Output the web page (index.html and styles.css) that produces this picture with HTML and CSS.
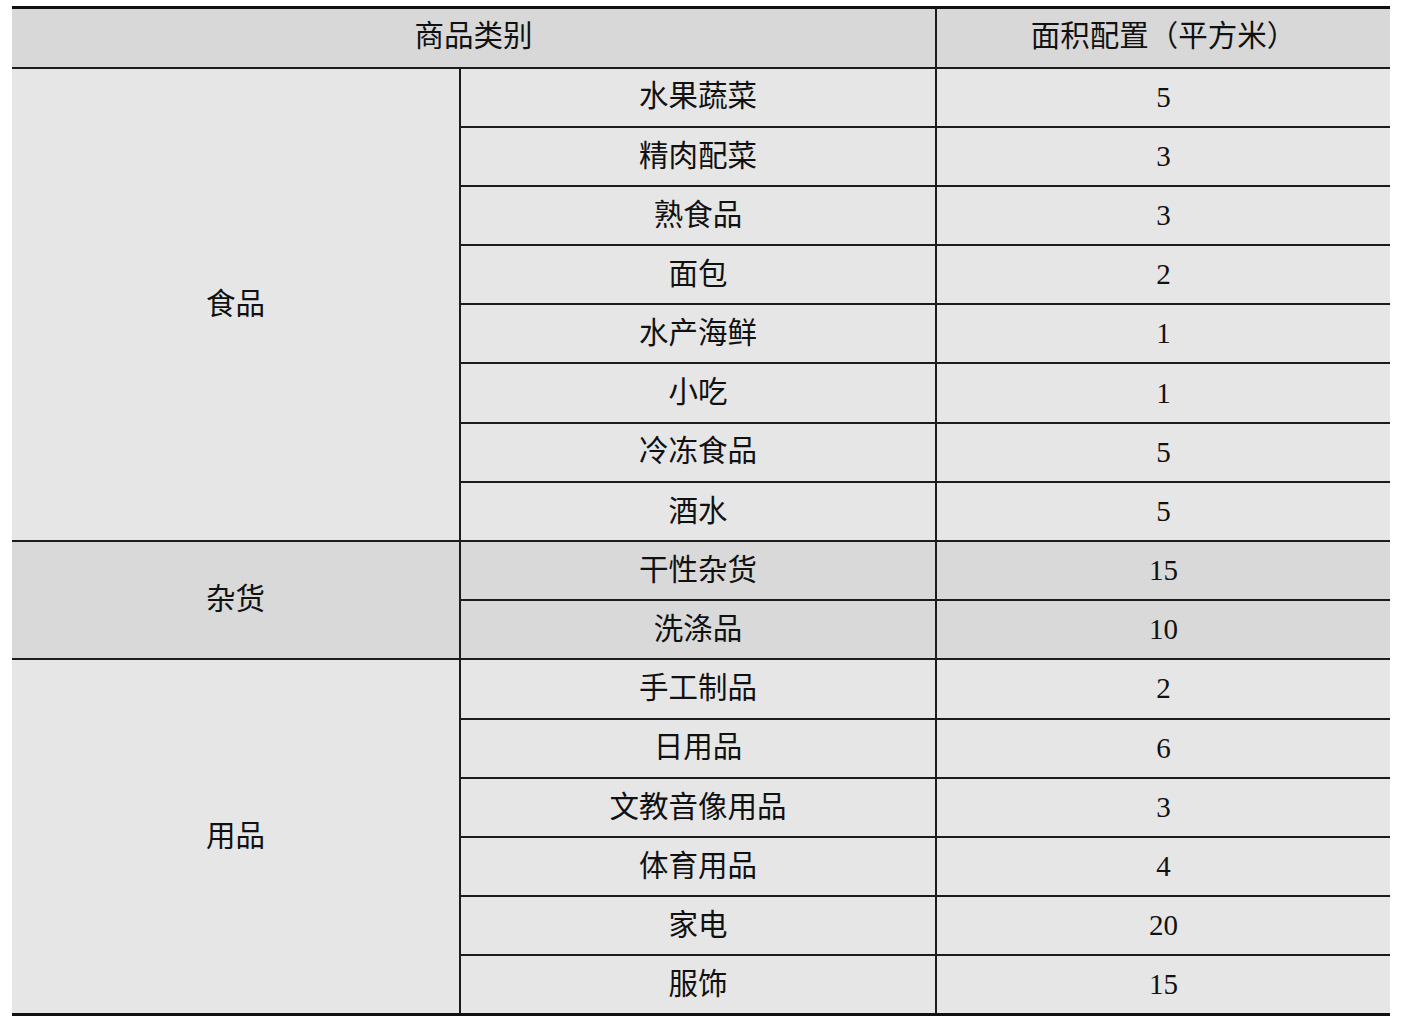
FILE: index.html
```html
<!DOCTYPE html>
<html lang="zh-CN">
<head>
<meta charset="utf-8">
<title>商品类别面积配置</title>
<link rel="stylesheet" href="styles.css">
</head>
<body>
<table class="area-table">
  <colgroup>
    <col class="c1"><col class="c2"><col class="c3">
  </colgroup>
  <thead>
    <tr class="head">
      <th colspan="2">商品类别</th>
      <th>面积配置（平方米）</th>
    </tr>
  </thead>
  <tbody>
    <tr><td class="cat" rowspan="8">食品</td><td>水果蔬菜</td><td class="num">5</td></tr>
    <tr><td>精肉配菜</td><td class="num">3</td></tr>
    <tr><td>熟食品</td><td class="num">3</td></tr>
    <tr><td>面包</td><td class="num">2</td></tr>
    <tr><td>水产海鲜</td><td class="num">1</td></tr>
    <tr><td>小吃</td><td class="num">1</td></tr>
    <tr><td>冷冻食品</td><td class="num">5</td></tr>
    <tr><td>酒水</td><td class="num">5</td></tr>
    <tr class="dark"><td class="cat" rowspan="2">杂货</td><td>干性杂货</td><td class="num">15</td></tr>
    <tr class="dark"><td>洗涤品</td><td class="num">10</td></tr>
    <tr><td class="cat" rowspan="6">用品</td><td>手工制品</td><td class="num">2</td></tr>
    <tr><td>日用品</td><td class="num">6</td></tr>
    <tr><td>文教音像用品</td><td class="num">3</td></tr>
    <tr><td>体育用品</td><td class="num">4</td></tr>
    <tr><td>家电</td><td class="num">20</td></tr>
    <tr class="last"><td>服饰</td><td class="num">15</td></tr>
  </tbody>
</table>
</body>
</html>
```
FILE: styles.css
```css
html, body {
  margin: 0;
  padding: 0;
  background: #ffffff;
}

.area-table {
  margin: 6px 0 0 12px;
  width: 1378px;
  border-collapse: collapse;
  table-layout: fixed;
  font-family: "Liberation Serif", "Noto Sans CJK SC", serif;
  font-size: 29.5px;
  color: #111111;
  background: #e6e6e6;
}

.c1 { width: 448px; }
.c2 { width: 476px; }
.c3 { width: 454px; }

.area-table th,
.area-table td {
  padding: 0;
  text-align: center;
  vertical-align: middle;
  font-weight: normal;
  border-top: 2px solid #1c1c1c;
  border-left: 2px solid #1c1c1c;
  line-height: 1;
}

.area-table th:first-child,
.area-table td.cat {
  border-left: none;
}

.head {
  height: 60px;
}

.head th {
  background: #d8d8d8;
  border-top: 3px solid #111111;
  padding-bottom: 2px;
}

.area-table tbody tr {
  height: 59.2px;
}

.dark td {
  background: #d9d9d9;
}

.area-table tbody tr.last td,
.area-table tbody tr:nth-child(11) td.cat {
  border-bottom: 3px solid #111111;
}

.num {
  font-size: 29px;
}
```
